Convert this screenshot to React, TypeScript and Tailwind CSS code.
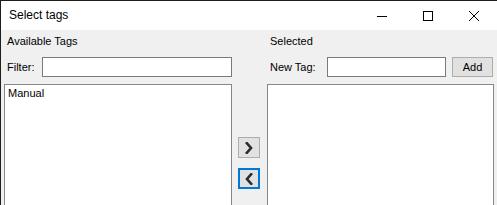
import React from "react";

const font = { fontFamily: '"Liberation Sans", Arial, sans-serif' };

function Chevron({ dir }: { dir: "right" | "left" }) {
  return (
    <svg width="8" height="12" viewBox="0 0 8 12" className="block">
      {dir === "right" ? (
        <polyline points="1.8,1.2 6,6 1.8,10.8" fill="none" stroke="#2b2b2b" strokeWidth="2.6" strokeLinecap="square" strokeLinejoin="miter" />
      ) : (
        <polyline points="6.2,1.2 2,6 6.2,10.8" fill="none" stroke="#2b2b2b" strokeWidth="2.6" strokeLinecap="square" strokeLinejoin="miter" />
      )}
    </svg>
  );
}

export default function App() {
  return (
    <div
      className="w-[497px] h-[205px] overflow-hidden border-t border-l border-[#1e1e1e] bg-[#f0f0f0] flex flex-col text-black"
      style={font}
    >
      {/* Title bar */}
      <div className="h-[29px] bg-white flex items-stretch shrink-0">
        <div className="flex-1 pl-[8px] pt-[7px] text-[12px] leading-[15px]">Select tags</div>
        <div className="w-[46px] flex items-center justify-center">
          <svg width="10" height="10" viewBox="0 0 10 10">
            <line x1="0" y1="5.5" x2="10" y2="5.5" stroke="#000" strokeWidth="1" />
          </svg>
        </div>
        <div className="w-[46px] flex items-center justify-center">
          <svg width="10" height="10" viewBox="0 0 10 10">
            <rect x="0.5" y="0.5" width="9" height="9" fill="none" stroke="#000" strokeWidth="1" />
          </svg>
        </div>
        <div className="w-[46px] flex items-center justify-center">
          <svg width="10" height="10" viewBox="0 0 10 10">
            <line x1="0" y1="0" x2="10" y2="10" stroke="#000" strokeWidth="1" />
            <line x1="10" y1="0" x2="0" y2="10" stroke="#000" strokeWidth="1" />
          </svg>
        </div>
      </div>

      {/* Content */}
      <div className="flex-1 flex pl-[3px] min-h-0 text-[11px] leading-[13px]">
        {/* Left column */}
        <div className="w-[228px] flex flex-col">
          <div className="h-[27px] pt-[5px] pl-[3px]">Available Tags</div>
          <div className="h-[20px] flex items-center">
            <div className="w-[38px] pl-[3px]">Filter:</div>
            <div className="flex-1 h-[20px] bg-white border border-[#7a7a7a]" />
          </div>
          <div className="mt-[7px] flex-1 bg-white border border-[#828790] border-b-0 pl-[3px] pt-[2px]">
            Manual
          </div>
        </div>

        {/* Middle buttons */}
        <div className="ml-[6px] w-[22px] flex flex-col pt-[107px] gap-[10px]">
          <div className="h-[21px] bg-[#e1e1e1] border border-[#adadad] flex items-center justify-center">
            <Chevron dir="right" />
          </div>
          <div className="h-[21px] bg-[#e1e1e1] border-2 border-[#0078d7] flex items-center justify-center">
            <Chevron dir="left" />
          </div>
        </div>

        {/* Right column */}
        <div className="ml-[7px] w-[227px] flex flex-col">
          <div className="h-[27px] pt-[5px] pl-[3px]">Selected</div>
          <div className="h-[20px] flex items-center">
            <div className="w-[60px] pl-[3px]">New Tag:</div>
            <div className="w-[119px] h-[20px] bg-white border border-[#7a7a7a]" />
            <div className="ml-[6px] w-[41px] h-[20px] bg-[#e1e1e1] border border-[#adadad] flex items-center justify-center">
              Add
            </div>
          </div>
          <div className="mt-[7px] flex-1 bg-white border border-[#828790] border-b-0" />
        </div>
      </div>
    </div>
  );
}
